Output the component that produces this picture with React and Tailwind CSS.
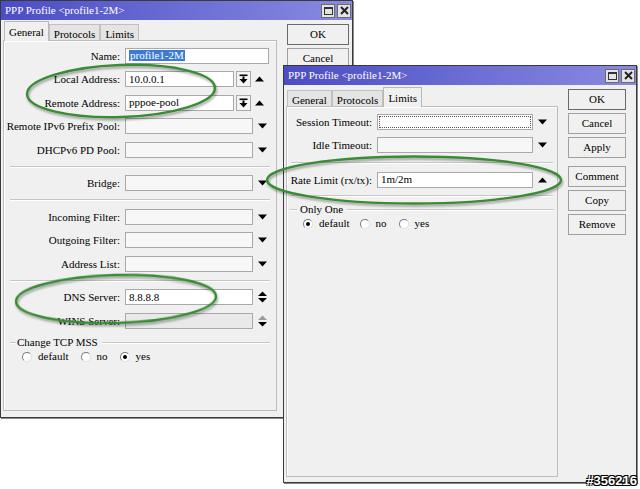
import React from "react"

const TriUp = ({ color = "#000" }) => (
  <svg width="9" height="6" viewBox="0 0 9 6">
    <polygon points="0,5.5 4.5,0.5 9,5.5" fill={color} />
  </svg>
)

const TriDown = () => (
  <svg width="9" height="6" viewBox="0 0 9 6">
    <polygon points="0,0.5 9,0.5 4.5,5.5" fill="#000" />
  </svg>
)

const UpDown = ({ dim }) => (
  <svg width="9" height="12" viewBox="0 0 9 12">
    <polygon points="0,5 4.5,0.5 9,5" fill={dim ? "#9a9a9a" : "#000"} />
    <polygon points="0,7 9,7 4.5,11.5" fill="#000" />
  </svg>
)

const PickIcon = () => (
  <svg width="9" height="10" viewBox="0 0 9 10">
    <rect x="0.5" y="0.5" width="8" height="1.6" fill="#000" />
    <rect x="3.5" y="2.5" width="2" height="3" fill="#000" />
    <polygon points="0.5,5 8.5,5 4.5,9.5" fill="#000" />
  </svg>
)

// ramka pola tekstowego / combo
const Box = ({ w, bg = "bg-white", children }) => (
  <div className={`flex h-[16px] items-center border border-[#a9a9a9] pl-[3px] leading-none ${w} ${bg}`}>
    {children}
  </div>
)

const Cell = ({ w = "w-[18px]", children }) => (
  <div className={`flex justify-center ${w}`}>{children}</div>
)

const Field = ({ label, lw, children }) => (
  <div className="flex h-[23.5px] items-center">
    <div className={`flex shrink-0 justify-end whitespace-nowrap ${lw}`}>{label}</div>
    <div className="ml-[5px] flex items-center">{children}</div>
  </div>
)

const Separator = ({ h = "h-[10px]", px = "px-[6px]" }) => (
  <div className={`flex items-center ${h} ${px}`}>
    <div className="h-[2px] w-full border-t border-b border-t-[#c6c6c6] border-b-white" />
  </div>
)

const Radio = ({ checked }) => (
  <div className="flex h-[10px] w-[10px] items-center justify-center rounded-full border border-[#7a7a7a] border-r-[#e0e0e0] border-b-[#e0e0e0] bg-white">
    {checked && <div className="h-[4px] w-[4px] rounded-full bg-black" />}
  </div>
)

const Button = ({ children, def, className = "" }) => (
  <div
    className={`flex h-[21px] items-center justify-center border bg-[#f0f0f0] ${
      def ? "border-[#6a6a6a]" : "border-[#a0a0a0]"
    } ${className}`}
  >
    {children}
  </div>
)

const TitleBtns = () => (
  <div className="flex gap-[2px]">
    <div className="flex h-[14px] w-[14px] items-center justify-center border border-[#6c6c6c] bg-[#e4e4e4]">
      <div className="h-[8px] w-[9px] border border-[#333] border-t-2" />
    </div>
    <div className="flex h-[14px] w-[14px] items-center justify-center border border-[#6c6c6c] bg-[#e4e4e4]">
      <svg width="9" height="9" viewBox="0 0 9 9">
        <path d="M1 1 L8 8 M8 1 L1 8" stroke="#222" strokeWidth="2" />
      </svg>
    </div>
  </div>
)

const Tab = ({ active, children }) =>
  active ? (
    <div className="relative z-10 -mb-px flex h-[20px] items-start border border-b-0 border-[#b8b8b8] bg-[#f0f0f0] px-[4px] pt-[2px]">
      {children}
    </div>
  ) : (
    <div className="flex h-[16px] items-start border border-b-0 border-[#c0c0c0] bg-[#e4e4e4] px-[4px] pt-[1px]">
      {children}
    </div>
  )

const Window = ({ className, children }) => (
  <div className={`absolute flex flex-col border border-[#3a3a3a] bg-[#f0f0f0] shadow-[1px_1px_0_#8a8a8a] ${className}`}>
    <div className="flex h-[19px] shrink-0 items-center justify-between bg-linear-to-r from-[#4c4cc4] to-[#8a8ae0] pl-[4px] pr-[1px] text-white">
      <span className="leading-none">PPP Profile &lt;profile1-2M&gt;</span>
      <TitleBtns />
    </div>
    {children}
  </div>
)

const Panel = ({ w, children }) => (
  <div className={`flex flex-1 flex-col border border-[#bcbcbc] bg-[#f0f0f0] shadow-[inset_1px_1px_0_#fff] pt-[3px] ${w}`}>
    {children}
  </div>
)

export default function App() {
  const lw1 = "w-[116px]"
  const lw2 = "w-[85px]"

  return (
    <div className="relative h-[489px] w-[640px] overflow-hidden bg-white [font-family:'Liberation_Serif',serif] text-[11px] font-normal text-black">
      {/* okno 1 - General */}
      <Window className="left-0 top-0 h-[418px] w-[353px]">
        <div className="flex flex-1 pl-[2px] pt-[1px] pb-[6px]">
          <div className="flex flex-col">
            <div className="flex h-[19px] items-end pl-[1px]">
              <Tab active>General</Tab>
              <Tab>Protocols</Tab>
              <Tab>Limits</Tab>
            </div>
            <Panel w="w-[274px]">
              <Field label="Name:" lw={lw1}>
                <Box w="w-[144px]">
                  <span className="bg-[#3d7ad6] px-[1px] text-white">profile1-2M</span>
                </Box>
              </Field>
              <Field label="Local Address:" lw={lw1}>
                <Box w="w-[109px]">10.0.0.1</Box>
                <div className="ml-[2px] flex h-[16px] w-[15px] items-center justify-center border border-[#a9a9a9] bg-[#f4f4f4]">
                  <PickIcon />
                </div>
                <Cell w="w-[16px]"><TriUp /></Cell>
              </Field>
              <Field label="Remote Address:" lw={lw1}>
                <Box w="w-[109px]">pppoe-pool</Box>
                <div className="ml-[2px] flex h-[16px] w-[15px] items-center justify-center border border-[#a9a9a9] bg-[#f4f4f4]">
                  <PickIcon />
                </div>
                <Cell w="w-[16px]"><TriUp /></Cell>
              </Field>
              <Field label="Remote IPv6 Prefix Pool:" lw={lw1}>
                <Box w="w-[128px]" bg="bg-[#f7f7f7]" />
                <Cell><TriDown /></Cell>
              </Field>
              <Field label="DHCPv6 PD Pool:" lw={lw1}>
                <Box w="w-[128px]" bg="bg-[#f7f7f7]" />
                <Cell><TriDown /></Cell>
              </Field>
              <Separator />
              <Field label="Bridge:" lw={lw1}>
                <Box w="w-[128px]" bg="bg-[#f7f7f7]" />
                <Cell><TriDown /></Cell>
              </Field>
              <Separator />
              <Field label="Incoming Filter:" lw={lw1}>
                <Box w="w-[128px]" bg="bg-[#f7f7f7]" />
                <Cell><TriDown /></Cell>
              </Field>
              <Field label="Outgoing Filter:" lw={lw1}>
                <Box w="w-[128px]" bg="bg-[#f7f7f7]" />
                <Cell><TriDown /></Cell>
              </Field>
              <Field label="Address List:" lw={lw1}>
                <Box w="w-[128px]" bg="bg-[#f7f7f7]" />
                <Cell><TriDown /></Cell>
              </Field>
              <Separator />
              <Field label="DNS Server:" lw={lw1}>
                <Box w="w-[128px]">8.8.8.8</Box>
                <Cell><UpDown /></Cell>
              </Field>
              <Field label="WINS Server:" lw={lw1}>
                <Box w="w-[128px]" bg="bg-[#e9e9e9]" />
                <Cell><UpDown dim /></Cell>
              </Field>

              {/* Change TCP MSS */}
              <div className="mt-[2px] flex h-[16px] items-center px-[6px]">
                <div className="h-[2px] w-[6px] border-t border-b border-t-[#c6c6c6] border-b-white" />
                <span className="ml-[1px] whitespace-nowrap">Change TCP MSS</span>
                <div className="ml-[4px] h-[2px] flex-1 border-t border-b border-t-[#c6c6c6] border-b-white" />
              </div>
              <div className="flex h-[12px] items-center pl-[18px]">
                <Radio />
                <span className="ml-[6px] mr-[12px]">default</span>
                <Radio />
                <span className="ml-[6px] mr-[12px]">no</span>
                <Radio checked />
                <span className="ml-[6px]">yes</span>
              </div>
            </Panel>
          </div>
          <div className="ml-[10px] mt-[3px] flex w-[62px] flex-col gap-[3px]">
            <Button def>OK</Button>
            <Button>Cancel</Button>
          </div>
        </div>
      </Window>

      {/* okno 2 - Limits */}
      <Window className="left-[283px] top-[65px] h-[418px] w-[354px]">
        <div className="flex flex-1 pl-[2px] pt-[1px] pb-[5px]">
          <div className="flex flex-col">
            <div className="flex h-[20px] items-end pl-[1px]">
              <Tab>General</Tab>
              <Tab>Protocols</Tab>
              <Tab active>Limits</Tab>
            </div>
            <Panel w="w-[272px]">
              <Field label="Session Timeout:" lw={lw2}>
                <div className="flex h-[16px] w-[156px] items-center justify-center border border-[#a9a9a9] bg-white">
                  <div className="h-[12px] w-[152px] border border-dotted border-[#555]" />
                </div>
                <Cell><TriDown /></Cell>
              </Field>
              <Field label="Idle Timeout:" lw={lw2}>
                <Box w="w-[156px]" bg="bg-[#f7f7f7]" />
                <Cell><TriDown /></Cell>
              </Field>
              <Separator h="h-[11px]" px="px-[4px]" />
              <Field label="Rate Limit (rx/tx):" lw={lw2}>
                <Box w="w-[156px]">1m/2m</Box>
                <Cell><TriUp /></Cell>
              </Field>
              <Separator h="h-[8px]" px="px-[4px]" />

              {/* Only One */}
              <div className="mt-[2px] flex h-[16px] items-center px-[3px]">
                <div className="h-[2px] w-[7px] border-t border-b border-t-[#c6c6c6] border-b-white" />
                <span className="ml-[3px] whitespace-nowrap">Only One</span>
                <div className="ml-[4px] h-[2px] flex-1 border-t border-b border-t-[#c6c6c6] border-b-white" />
              </div>
              <div className="flex h-[12px] items-center pl-[16px]">
                <Radio checked />
                <span className="ml-[6px] mr-[10px]">default</span>
                <Radio />
                <span className="ml-[6px] mr-[12px]">no</span>
                <Radio />
                <span className="ml-[6px]">yes</span>
              </div>
            </Panel>
          </div>
          <div className="ml-[10px] mt-[3px] flex w-[58px] flex-col gap-[3px]">
            <Button def>OK</Button>
            <Button>Cancel</Button>
            <Button>Apply</Button>
            <Button className="mt-[5px]">Comment</Button>
            <Button>Copy</Button>
            <Button>Remove</Button>
          </div>
        </div>
      </Window>

      {/* zielone obwódki */}
      <svg className="pointer-events-none absolute left-0 top-0" width="640" height="489" viewBox="0 0 640 489">
        <defs>
          <filter id="sh" x="-10%" y="-30%" width="120%" height="160%">
            <feDropShadow dx="1" dy="2" stdDeviation="1.2" floodColor="#000" floodOpacity="0.35" />
          </filter>
        </defs>
        <g fill="none" stroke="#3b8a36" strokeWidth="2.4" filter="url(#sh)">
          <ellipse cx="121" cy="91" rx="94" ry="26" transform="rotate(-2 121 91)" />
          <ellipse cx="116" cy="299" rx="100" ry="24" transform="rotate(-1.5 116 299)" />
          <ellipse cx="414" cy="180" rx="147" ry="23.5" />
        </g>
      </svg>

      <div className="absolute bottom-[2px] right-[3px] [font-family:'Liberation_Sans',sans-serif] text-[13px] font-bold leading-none text-white [text-shadow:-1px_-1px_0_#000,1px_-1px_0_#000,-1px_1px_0_#000,1px_1px_0_#000]">
        #356216
      </div>
    </div>
  )
}
